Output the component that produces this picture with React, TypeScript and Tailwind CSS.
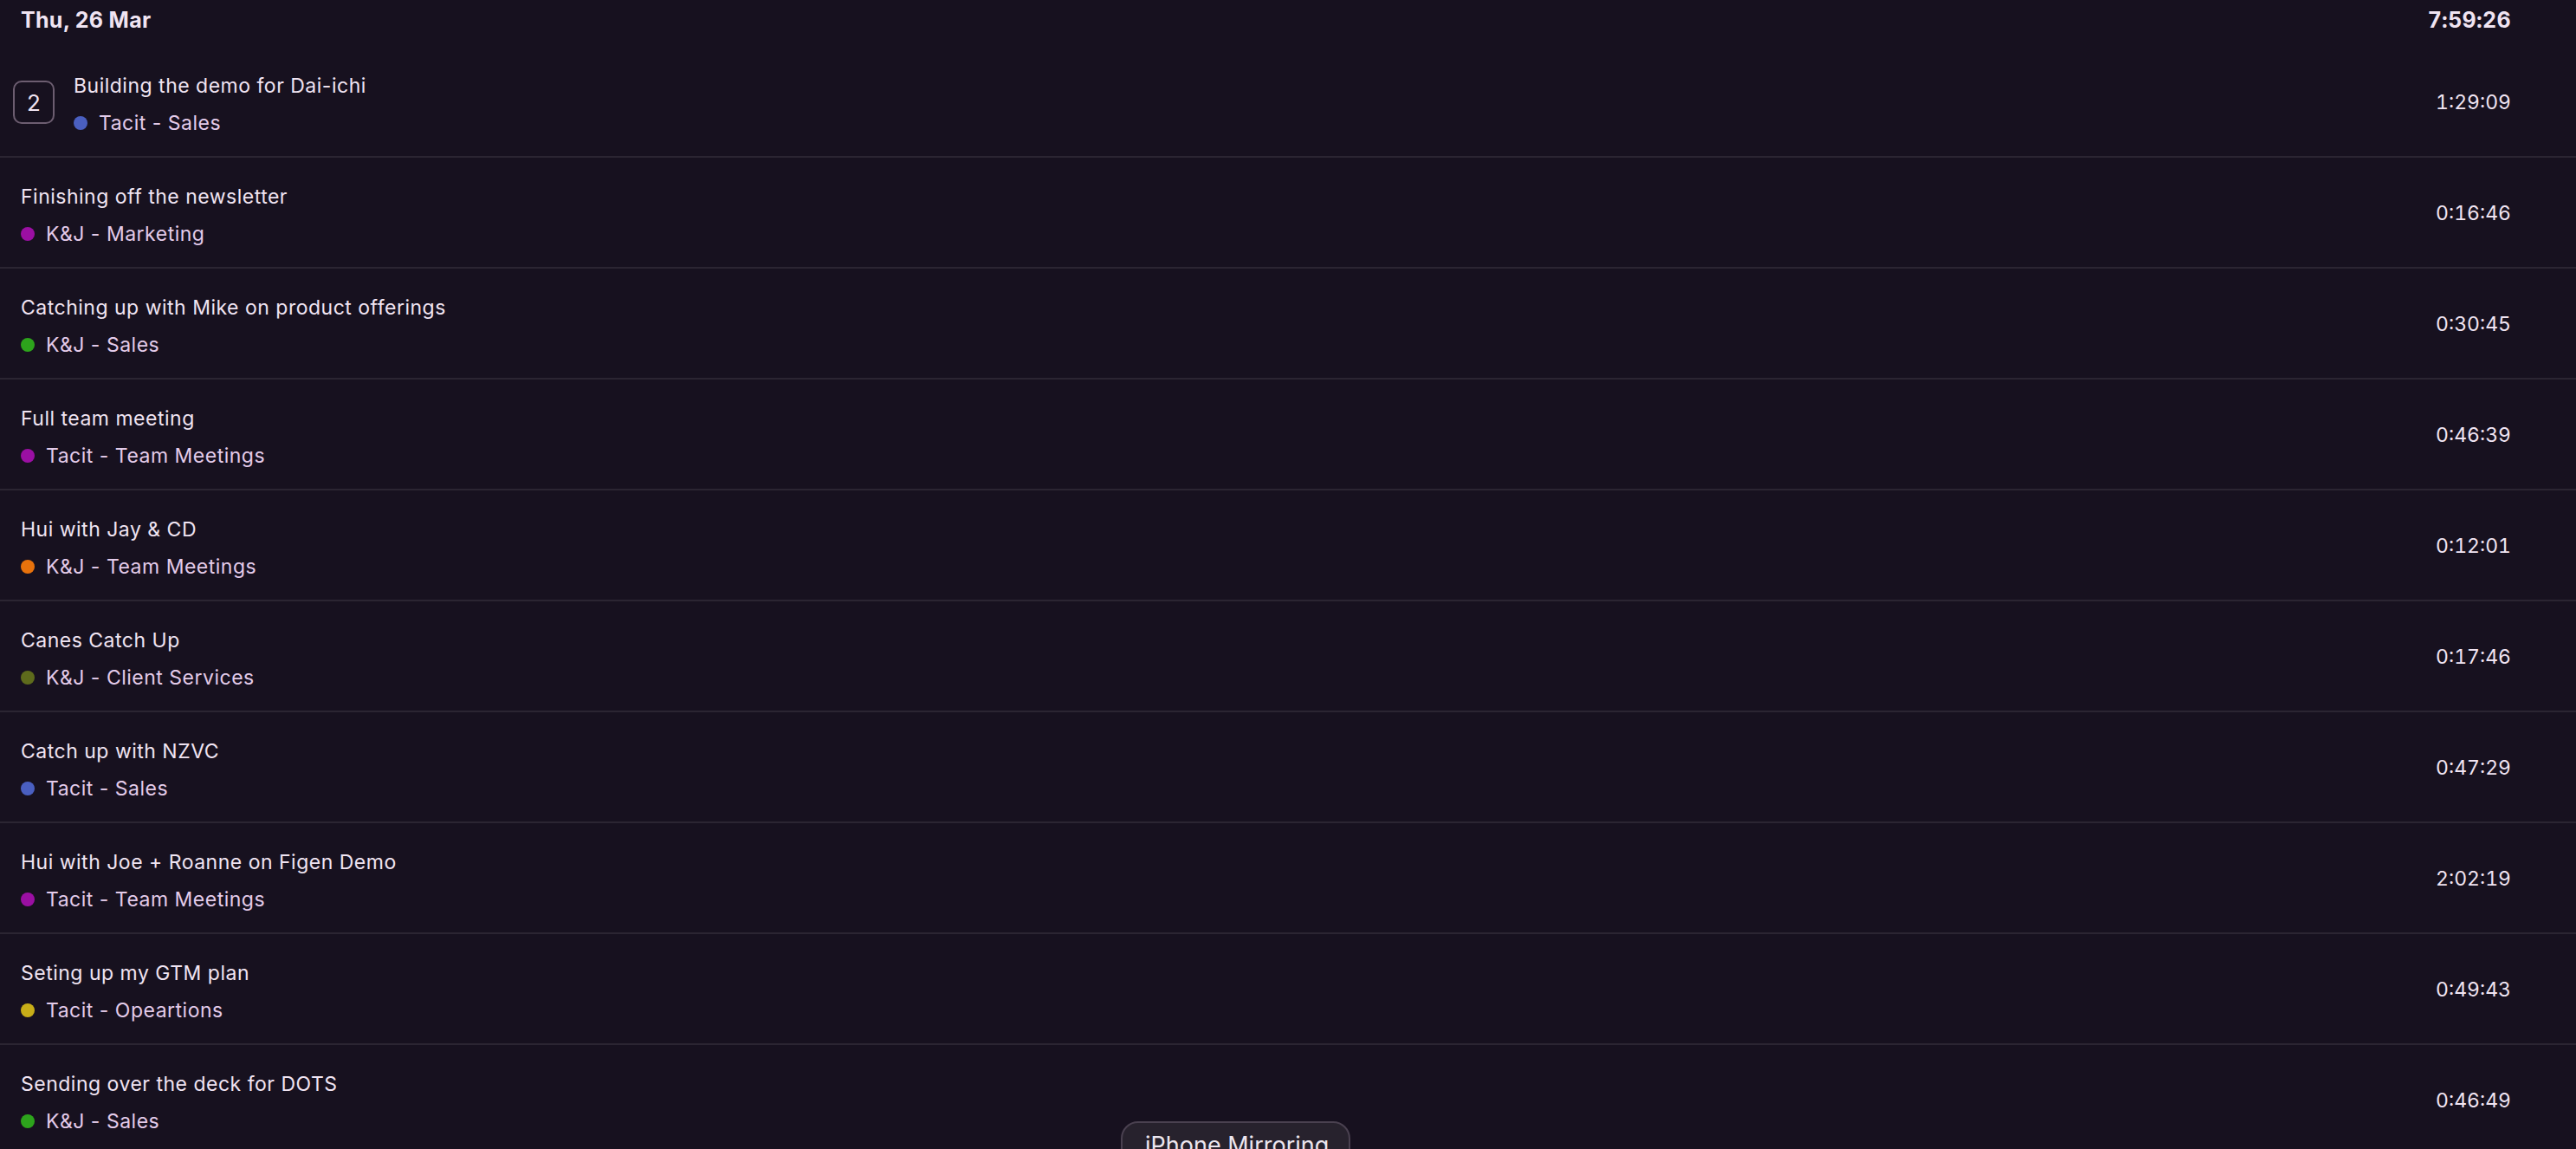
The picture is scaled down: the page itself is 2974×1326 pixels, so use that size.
import React from "react";

type Entry = {
    title: string;
    project: string;
    dot: string;
    time: string;
    count?: number;
};

const entries: Entry[] = [
    { title: "Building the demo for Dai-ichi", project: "Tacit - Sales", dot: "bg-[#4a5fc0]", time: "1:29:09", count: 2 },
    { title: "Finishing off the newsletter", project: "K&J - Marketing", dot: "bg-[#9b0fa3]", time: "0:16:46" },
    { title: "Catching up with Mike on product offerings", project: "K&J - Sales", dot: "bg-[#2da41c]", time: "0:30:45" },
    { title: "Full team meeting", project: "Tacit - Team Meetings", dot: "bg-[#9b0fa3]", time: "0:46:39" },
    { title: "Hui with Jay & CD", project: "K&J - Team Meetings", dot: "bg-[#e8720c]", time: "0:12:01" },
    { title: "Canes Catch Up", project: "K&J - Client Services", dot: "bg-[#5e6b1c]", time: "0:17:46" },
    { title: "Catch up with NZVC", project: "Tacit - Sales", dot: "bg-[#4a5fc0]", time: "0:47:29" },
    { title: "Hui with Joe + Roanne on Figen Demo", project: "Tacit - Team Meetings", dot: "bg-[#9b0fa3]", time: "2:02:19" },
    { title: "Seting up my GTM plan", project: "Tacit - Opeartions", dot: "bg-[#c8ae18]", time: "0:49:43" },
    { title: "Sending over the deck for DOTS", project: "K&J - Sales", dot: "bg-[#2da41c]", time: "0:46:49" },
];

function Row({ entry }: { entry: Entry }) {
    return (
        <div className="flex items-center h-[128px] border-b-2 border-[#2b2532] pl-[15px] pr-[75px]">
            {entry.count ? (
                <div className="w-[48px] h-[50px] mr-[22px] mt-[2px] rounded-[10px] border-2 border-[#6c5d70] flex items-center justify-center text-[26px] text-[#f0e4f2]">
                    {entry.count}
                </div>
            ) : (
                <div className="w-[9px]" />
            )}
            <div className="flex flex-col flex-1 pt-[6px]">
                <div className="text-[23px] leading-[28px] tracking-[0.5px] text-[#f0e4f2]">{entry.title}</div>
                <div className="flex items-center gap-[13px] mt-[15px]">
                    <span className={`w-[16px] h-[16px] rounded-full ${entry.dot}`} />
                    <span className="text-[23px] leading-[28px] tracking-[0.5px] text-[#e3cbe9]">{entry.project}</span>
                </div>
            </div>
            <div className="text-[23px] text-[#f0e4f2] tabular-nums pt-[3px]">{entry.time}</div>
        </div>
    );
}

export default function App() {
    return (
        <div
            className="relative w-full h-[1326px] overflow-hidden bg-[#17111f]"
            style={{ fontFamily: "Inter, 'Noto Sans', sans-serif" }}
        >
            {/* day header */}
            <div className="flex items-center justify-between h-[54px] pl-[24px] pr-[75px] pb-[6px]">
                <div className="text-[25px] font-bold tracking-[0.3px] text-[#f0e4f2]">Thu, 26 Mar</div>
                <div className="text-[25px] font-bold tracking-[0.3px] text-[#f0e4f2] tabular-nums">7:59:26</div>
            </div>
            {entries.map((e, i) => (
                <Row key={i} entry={e} />
            ))}
            {/* macOS overlay */}
            <div className="absolute left-[1294px] top-[1294px] w-[265px] h-[60px] rounded-[20px] border-2 border-[#4a4150] bg-[#27222d] pl-[26px] pt-[6px] text-[27px] text-[#ece6ef]">
                iPhone Mirroring
            </div>
        </div>
    );
}
